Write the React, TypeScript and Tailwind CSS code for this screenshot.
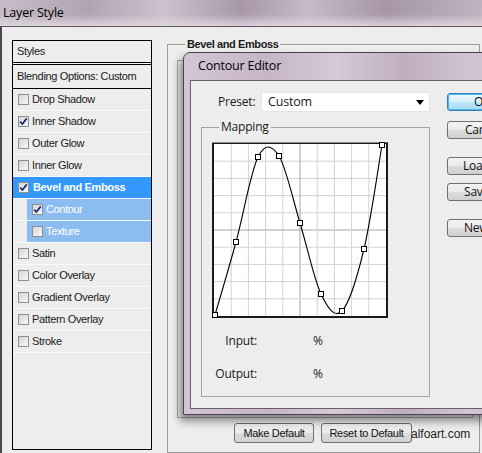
import React from "react";

const pts: [number, number][] = [
  [3, 173],
  [24, 100],
  [46, 15],
  [67, 14],
  [88, 81],
  [109, 152],
  [130, 169],
  [152, 107],
  [170, 3],
];

function splinePath(p: [number, number][]) {
  let d = `M${p[0][0]} ${p[0][1]}`;
  for (let i = 0; i < p.length - 1; i++) {
    const p0 = p[i - 1] || p[i];
    const p1 = p[i];
    const p2 = p[i + 1];
    const p3 = p[i + 2] || p[i + 1];
    const c1x = p1[0] + (p2[0] - p0[0]) / 6;
    const c1y = p1[1] + (p2[1] - p0[1]) / 6;
    const c2x = p2[0] - (p3[0] - p1[0]) / 6;
    const c2y = p2[1] - (p3[1] - p1[1]) / 6;
    d += ` C${c1x} ${c1y} ${c2x} ${c2y} ${p2[0]} ${p2[1]}`;
  }
  return d;
}

function Check({ checked }: { checked?: boolean }) {
  return (
    <span className="flex h-[11px] w-[11px] shrink-0 items-center justify-center border border-[#8e8f8f] bg-[linear-gradient(135deg,#d4d4d4,#f8f8f8)]">
      {checked && (
        <svg width="9" height="9" viewBox="0 0 9 9">
          <path d="M1.2 4.6 L3.4 7 L7.8 1.4" stroke="#1d2474" strokeWidth="1.7" fill="none" />
        </svg>
      )}
    </span>
  );
}

type Row = { label: string; checked?: boolean; sel?: "main" | "sub" };

const rows: Row[] = [
  { label: "Drop Shadow" },
  { label: "Inner Shadow", checked: true },
  { label: "Outer Glow" },
  { label: "Inner Glow" },
  { label: "Bevel and Emboss", checked: true, sel: "main" },
  { label: "Contour", checked: true, sel: "sub" },
  { label: "Texture", sel: "sub" },
  { label: "Satin" },
  { label: "Color Overlay" },
  { label: "Gradient Overlay" },
  { label: "Pattern Overlay" },
  { label: "Stroke" },
];

function StylesPanel() {
  return (
    <div className="ml-[10px] mt-[13px] flex h-[410px] w-[140px] shrink-0 flex-col border border-black bg-[#ededed] text-[11px] tracking-[-0.35px]">
      <div className="flex h-[21px] items-center pl-[4px]">Styles</div>
      <div className="h-[3px] border-y border-black bg-[#f6f6f6]" />
      <div className="flex h-[24px] items-center border-b border-black pl-[4px]">Blending Options: Custom</div>
      {rows.map((r) => {
        if (r.sel === "main") {
          return (
            <div key={r.label} className="flex h-[22px] border-b border-[#fafafa]">
              <div className="flex flex-1 items-center gap-[4px] bg-[#3399fe] pl-[5px] font-bold text-white">
                <Check checked={r.checked} />
                <span>{r.label}</span>
              </div>
            </div>
          );
        }
        if (r.sel === "sub") {
          return (
            <div key={r.label} className="flex h-[22px] border-b border-[#fafafa] pl-[14px]">
              <div className="flex flex-1 items-center gap-[3px] bg-[#8cbdf0] pl-[5px] text-white">
                <Check checked={r.checked} />
                <span>{r.label}</span>
              </div>
            </div>
          );
        }
        return (
          <div key={r.label} className="flex h-[22px] items-center gap-[3px] border-b border-[#fafafa] pl-[5px]">
            <Check checked={r.checked} />
            <span>{r.label}</span>
          </div>
        );
      })}
    </div>
  );
}

function GrayButton({ children, w }: { children: React.ReactNode; w: string }) {
  return (
    <div
      className={`flex h-[20px] items-center justify-center rounded-[3px] border border-[#707070] bg-[linear-gradient(180deg,#f2f2f2_0%,#ebebeb_50%,#dddddd_51%,#cfcfcf_100%)] text-[11px] tracking-[-0.3px] text-[#111] ${w}`}
    >
      {children}
    </div>
  );
}

function SideButton({ children, primary, mt, pl }: { children: React.ReactNode; primary?: boolean; mt: string; pl: string }) {
  return (
    <div
      className={`flex h-[18px] w-[72px] items-center justify-start whitespace-nowrap rounded-[3px] border text-[12px] leading-none text-[#111] ${mt} ${pl} ${
        primary
          ? "border-[#3c7fb1] bg-[linear-gradient(180deg,#eaf6fd_0%,#d9f0fc_50%,#bee6fd_51%,#a7d9f5_100%)] shadow-[inset_0_0_0_1px_#48b7ee]"
          : "border-[#707070] bg-[linear-gradient(180deg,#f2f2f2_0%,#ebebeb_50%,#dddddd_51%,#cfcfcf_100%)]"
      }`}
    >
      {children}
    </div>
  );
}

function Graph() {
  const lines = [];
  for (let i = 1; i < 10; i++) {
    const v = 2 + (172 * i) / 10;
    const c = i === 5 ? "#a6a6a6" : "#d2d2d2";
    lines.push(<line key={"v" + i} x1={v} y1={2} x2={v} y2={174} stroke={c} strokeWidth="1" />);
    lines.push(<line key={"h" + i} x1={2} y1={v} x2={174} y2={v} stroke={c} strokeWidth="1" />);
  }
  return (
    <svg width="176" height="176" viewBox="0 0 176 176" className="ml-[10px] mt-[8px] block">
      <rect x="0" y="0" width="176" height="176" fill="#1a1a1a" />
      <rect x="0" y="0" width="175" height="1" fill="#8a8a8a" />
      <rect x="2" y="2" width="172" height="172" fill="#ffffff" />
      {lines}
      <path d={splinePath(pts)} stroke="#000" strokeWidth="1.1" fill="none" />
      {pts.map(([x, y], i) => (
        <rect key={i} x={x - 2.5} y={y - 2.5} width="5" height="5" fill="#fff" stroke="#000" strokeWidth="1" />
      ))}
    </svg>
  );
}

function ContourEditor() {
  return (
    <div className="absolute left-[183px] top-[52px] flex h-[363px] w-[340px] flex-col rounded-tl-[7px] border border-[#4a424c] bg-[linear-gradient(90deg,#d3c5d4_0%,#c6b5c7_25%,#d6cad7_45%,#bfaec0_65%,#d2c5d3_85%,#c8b9c9_100%)] px-[6px] pb-[5px] font-['Open_Sans',sans-serif] shadow-[-3px_6px_9px_rgba(0,0,0,0.45)]">
      <div className="flex h-[27px] shrink-0 items-center pl-[8px] text-[12.5px] tracking-[-0.2px] text-black">Contour Editor</div>
      <div className="flex flex-1 border border-[#6a606c] bg-[#ededed] text-[12px] tracking-[-0.2px] text-[#1b1b1b]">
        <div className="flex w-[240px] shrink-0 flex-col">
          <div className="mt-[11px] flex h-[20px] items-center">
            <span className="w-[70px] shrink-0 pl-[27px]">Preset:</span>
            <div className="flex h-[20px] w-[169px] items-center justify-between border border-[#e4e4e4] bg-white pl-[6px] pr-[5px] text-[12.5px]">
              <span>Custom</span>
              <svg width="8" height="5" viewBox="0 0 8 5">
                <path d="M0 0 H8 L4 5 Z" fill="#000" />
              </svg>
            </div>
          </div>
          <fieldset className="ml-[10px] mt-[8px] w-[229px] border border-[#a3a3a3] pb-[12px]">
            <legend className="ml-[17px] px-[2px] leading-[14px]">Mapping</legend>
            <Graph />
            <div className="mt-[13px] flex h-[20px] items-center">
              <span className="w-[55px] text-right">Input:</span>
              <span className="ml-[56px]">%</span>
            </div>
            <div className="mt-[13px] flex h-[20px] items-center">
              <span className="w-[55px] text-right">Output:</span>
              <span className="ml-[56px]">%</span>
            </div>
          </fieldset>
        </div>
        <div className="ml-[16px] flex flex-col">
          <SideButton primary mt="mt-[12px]" pl="pl-[26px]">OK</SideButton>
          <SideButton mt="mt-[10px]" pl="pl-[17px]">Cancel</SideButton>
          <SideButton mt="mt-[18px]" pl="pl-[15px]">Load...</SideButton>
          <SideButton mt="mt-[8px]" pl="pl-[16px]">Save...</SideButton>
          <SideButton mt="mt-[18px]" pl="pl-[16px]">New...</SideButton>
        </div>
      </div>
    </div>
  );
}

export default function App() {
  return (
    <div className="relative h-[453px] w-[482px] overflow-hidden bg-[#ededed] font-['Liberation_Sans',Arial,sans-serif] text-[#1a1a1a]">
      <div className="flex h-[27px] items-center border-b border-[#5e5560] bg-[linear-gradient(180deg,rgba(255,255,255,0)_55%,rgba(225,218,226,0.85)_100%),linear-gradient(90deg,#c6bcc7_0%,#b2a3b3_18%,#cdc1ce_34%,#a898a9_50%,#c7b9c8_64%,#a696a7_80%,#c0b3c1_100%)] pl-[3px]">
        <span className="font-['Open_Sans',sans-serif] text-[12.5px] tracking-[-0.2px] text-black">Layer Style</span>
      </div>
      <div className="flex h-[426px] border-l-2 border-[#4d454f]">
        <StylesPanel />
        <fieldset className="ml-[15px] mt-[10px] h-[416px] w-[313px] shrink-0 border border-[#9c9c9c]">
          <legend className="ml-[17px] px-[2px] text-[11px] font-bold leading-[14px] tracking-[-0.4px]">Bevel and Emboss</legend>
          <div className="ml-[9px] mt-[9px] h-[358px] w-[296px] border border-[#a8a8a8]" />
          <div className="ml-[66px] mt-[5px] flex gap-[7px]">
            <GrayButton w="w-[80px]">Make Default</GrayButton>
            <GrayButton w="w-[91px]">Reset to Default</GrayButton>
          </div>
        </fieldset>
      </div>
      <ContourEditor />
      <span className="absolute left-[411px] top-[425px] text-[12px] text-[#222]">alfoart.com</span>
    </div>
  );
}
